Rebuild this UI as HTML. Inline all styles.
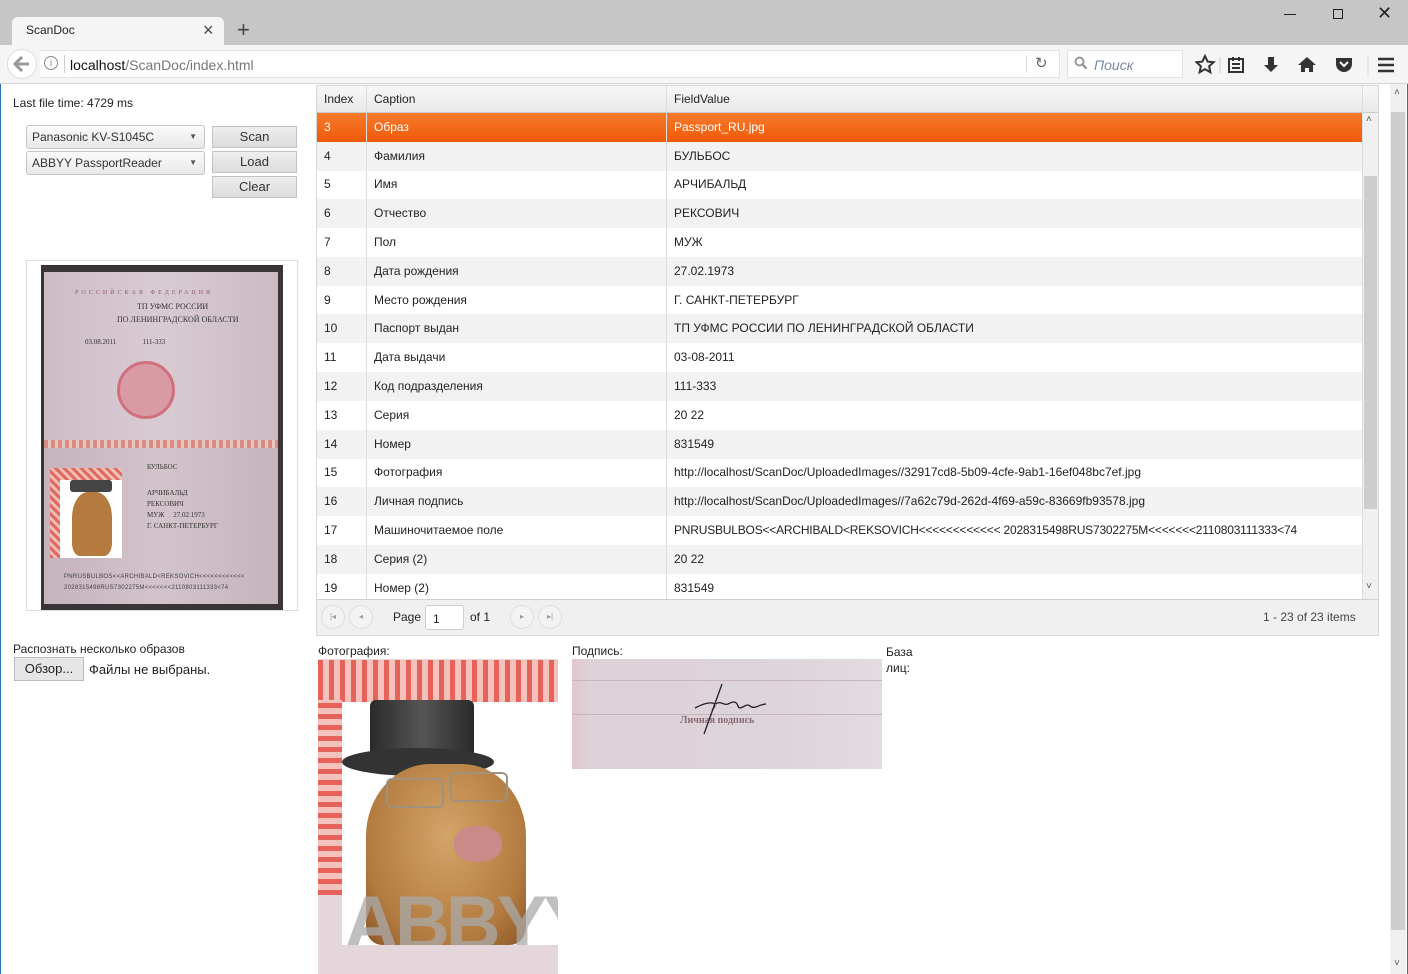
<!DOCTYPE html>
<html><head><meta charset="utf-8"><style>
*{box-sizing:border-box;margin:0;padding:0}
body{width:1408px;height:974px;overflow:hidden;background:#fff;font-family:"Liberation Sans","DejaVu Sans",sans-serif;font-size:12px;color:#222;position:relative}
.abs{position:absolute}
.tabbar{left:0;top:0;width:1408px;height:45px;background:#c6c6c6}
.tab{left:12px;top:17px;width:212px;height:30px;background:#f5f5f5;border-radius:6px 6px 0 0}
.nav{left:0;top:45px;width:1408px;height:39px;background:#f5f5f5;border-bottom:1px solid #d4d4d4}
.url{left:40px;top:50px;width:1020px;height:28px;background:#fff;border:1px solid #e2e2e2;border-left:none}
.search{left:1067px;top:50px;width:116px;height:28px;background:#fff;border:1px solid #e2e2e2}
.sel{left:26px;width:179px;height:24px;border:1px solid #c5c5c5;border-radius:3px;background:linear-gradient(#fafafa,#e8e8e8);padding:4px 5px;color:#333}
.sel:after{content:"▼";position:absolute;right:7px;top:6px;font-size:8px;color:#555}
.btn{left:212px;width:85px;height:22px;border:1px solid #c2c2c2;background:linear-gradient(#eee,#dcdcdc);text-align:center;line-height:20px;font-size:13px;color:#333}
.grid{left:316px;top:85px;width:1063px;height:551px;border:1px solid #d6d6d6}
.row{position:absolute;left:0;width:1045px;height:29px;line-height:29px}
.row span{position:absolute;top:0}
.c1{left:7px}.c2{left:57px}.c3{left:357px;white-space:nowrap}
.alt{background:#f2f2f2}
.vl{position:absolute;top:0;width:1px;background:#ddd}
.pbtn{width:24px;height:24px;border:1px solid #ddd;border-radius:50%;position:absolute;top:519px;font-size:8px;color:#999;text-align:center;line-height:22px;background:#f3f3f3}
</style></head><body>
<div class="abs tabbar"></div>
<div class="abs tab"></div>
<div class="abs" style="left:26px;top:23px;font-size:12px">ScanDoc</div>
<div class="abs" style="left:203px;top:20px;font-size:18px;color:#444">×</div>
<div class="abs" style="left:237px;top:17px;font-size:22px;color:#444">+</div>
<div class="abs" style="left:1284px;top:14px;width:12px;height:1px;background:#222"></div>
<div class="abs" style="left:1333px;top:9px;width:10px;height:10px;border:1px solid #222"></div>
<div class="abs" style="left:1377px;top:3px;font-size:18px;color:#222">✕</div>
<div class="abs nav"></div>
<div class="abs" style="left:7px;top:49px;width:30px;height:30px;border-radius:50%;background:#fff;border:1px solid #ddd"></div>
<svg class="abs" style="left:13px;top:56px" width="18" height="16"><path d="M9 1L2 8l7 7M2 8h14" fill="none" stroke="#999" stroke-width="3"/></svg>
<div class="abs url"></div>
<div class="abs" style="left:44px;top:56px;width:14px;height:14px;border:1px solid #888;border-radius:50%;font-size:9px;text-align:center;line-height:12px;color:#777">i</div>
<div class="abs" style="left:64px;top:55px;width:1px;height:18px;background:#ccc"></div>
<div class="abs" style="left:70px;top:57px;font-size:14px;color:#111">localhost<span style="color:#777">/ScanDoc/index.html</span></div>
<div class="abs" style="left:1026px;top:55px;width:1px;height:18px;background:#ddd"></div>
<div class="abs" style="left:1035px;top:54px;font-size:15px;color:#666">↻</div>
<div class="abs search"></div>
<svg class="abs" style="left:1074px;top:56px" width="14" height="14"><circle cx="5.5" cy="5.5" r="4" fill="none" stroke="#999" stroke-width="2"/><path d="M8.5 8.5l4 4" stroke="#999" stroke-width="2.5"/></svg>
<div class="abs" style="left:1094px;top:57px;font-size:14px;font-style:italic;color:#7a8aa0">Поиск</div>
<svg class="abs" style="left:1195px;top:54px" width="200" height="22" viewBox="0 0 200 22">
<path d="M10 2l2.6 5.6 6 .6-4.5 4 1.3 6-5.4-3.1-5.4 3.1 1.3-6-4.5-4 6-.6z" fill="none" stroke="#333" stroke-width="2"/>
<line x1="25" y1="3" x2="25" y2="19" stroke="#ccc"/>
<rect x="34" y="5" width="14" height="13" fill="none" stroke="#333" stroke-width="2"/><path d="M38 3v4M44 3v4M37 10h8M37 14h8" stroke="#333" stroke-width="2"/>
<path d="M73 3v8h-4l7 7 7-7h-4V3z" fill="#333"/>
<path d="M112 3l-9 8h3v7h4v-4h4v4h4v-7h3z" fill="#333"/>
<path d="M141 4h16v6a8 8 0 0 1-16 0z" fill="#333"/><path d="M145 8l4 4 4-4" stroke="#fff" stroke-width="2" fill="none"/>
<line x1="173" y1="0" x2="173" y2="22" stroke="#ddd"/>
<path d="M183 5h16M183 11h16M183 17h16" stroke="#333" stroke-width="2.5"/>
</svg>
<div class="abs" style="left:0;top:84px;width:1px;height:890px;background:#2b6fbf"></div>
<div class="abs" style="left:1407px;top:84px;width:1px;height:890px;background:#2b6fbf"></div>

<div class="abs" style="left:13px;top:96px">Last file time: 4729 ms</div>
<div class="abs sel" style="top:125px">Panasonic KV-S1045C</div>
<div class="abs sel" style="top:151px">ABBYY PassportReader</div>
<div class="abs btn" style="top:126px">Scan</div>
<div class="abs btn" style="top:151px">Load</div>
<div class="abs btn" style="top:176px">Clear</div>

<div class="abs" style="left:26px;top:260px;width:272px;height:351px;border:1px solid #ddd"></div>
<div class="abs" style="left:41px;top:265px;width:242px;height:345px;background:#3a3437"></div>
<div class="abs" style="left:44px;top:272px;width:234px;height:168px;background:linear-gradient(90deg,#cdbcc6,#d9cbd3 50%,#cbbac3)"></div>
<div class="abs" style="left:44px;top:440px;width:234px;height:8px;background:repeating-linear-gradient(90deg,#d98b86 0 4px,#e8c6c0 4px 7px)"></div>
<div class="abs" style="left:44px;top:448px;width:234px;height:156px;background:linear-gradient(90deg,#c5b3bd,#d3c3cb 50%,#c6b4bd)"></div>
<div class="abs" style="left:117px;top:361px;width:58px;height:58px;border-radius:50%;border:3px solid #d0707f;background:#d89aa5"></div>
<div class="abs" style="left:75px;top:290px;font-family:'Liberation Serif',serif;font-size:6px;letter-spacing:3px;color:#8a5a6a">РОССИЙСКАЯ ФЕДЕРАЦИЯ</div>
<div class="abs" style="left:137px;top:302px;font-family:'Liberation Serif',serif;font-size:8px;color:#333">ТП УФМС РОССИИ</div>
<div class="abs" style="left:117px;top:315px;font-family:'Liberation Serif',serif;font-size:8px;color:#333">ПО ЛЕНИНГРАДСКОЙ ОБЛАСТИ</div>
<div class="abs" style="left:85px;top:338px;font-family:'Liberation Serif',serif;font-size:7px;color:#333">03.08.2011 &nbsp; &nbsp; &nbsp; &nbsp; &nbsp; &nbsp; &nbsp; 111-333</div>
<div class="abs" style="left:50px;top:468px;width:72px;height:90px;background:repeating-linear-gradient(45deg,#e06a60 0 3px,#f0c0b8 3px 6px)"></div>
<div class="abs" style="left:60px;top:480px;width:62px;height:78px;background:#fff"></div>
<div class="abs" style="left:70px;top:480px;width:42px;height:12px;background:#444;border-radius:3px"></div>
<div class="abs" style="left:72px;top:492px;width:40px;height:64px;background:#b47a3e;border-radius:40% 40% 20% 20%"></div>
<div class="abs" style="left:147px;top:463px;font-family:'Liberation Serif',serif;font-size:7px;color:#333">БУЛЬБОС</div>
<div class="abs" style="left:147px;top:488px;font-family:'Liberation Serif',serif;font-size:7px;color:#333;line-height:11px">АРЧИБАЛЬД<br>РЕКСОВИЧ<br>МУЖ &nbsp; &nbsp; 27.02.1973<br>Г. САНКТ-ПЕТЕРБУРГ</div>
<div class="abs" style="left:64px;top:572px;font-size:6px;color:#444;line-height:11px;letter-spacing:.3px">PNRUSBULBOS&lt;&lt;ARCHIBALD&lt;REKSOVICH&lt;&lt;&lt;&lt;&lt;&lt;&lt;&lt;&lt;&lt;&lt;&lt;<br>2028315498RUS7302275M&lt;&lt;&lt;&lt;&lt;&lt;&lt;2110803111333&lt;74</div>

<div class="abs" style="left:13px;top:642px">Распознать несколько образов</div>
<div class="abs" style="left:14px;top:657px;width:70px;height:24px;border:1px solid #bbb;background:#e6e6e6;text-align:center;line-height:22px;font-size:13px">Обзор...</div>
<div class="abs" style="left:89px;top:662px;font-size:13px">Файлы не выбраны.</div>

<div class="abs grid">
<div style="position:absolute;left:0;top:0;width:1061px;height:27px;background:linear-gradient(#f7f7f7,#e9e9e9);border-bottom:1px solid #ccc"></div>
<div class="row" style="top:0;height:27px;line-height:27px"><span class="c1">Index</span><span class="c2">Caption</span><span class="c3">FieldValue</span></div>
<div class="row" style="top:27px;background:linear-gradient(#f57a2c,#f05a0a);color:#fff"><span class="c1">3</span><span class="c2">Образ</span><span class="c3">Passport_RU.jpg</span></div>
<div class="row alt" style="top:56px"><span class="c1">4</span><span class="c2">Фамилия</span><span class="c3">БУЛЬБОС</span></div>
<div class="row" style="top:84px"><span class="c1">5</span><span class="c2">Имя</span><span class="c3">АРЧИБАЛЬД</span></div>
<div class="row alt" style="top:113px"><span class="c1">6</span><span class="c2">Отчество</span><span class="c3">РЕКСОВИЧ</span></div>
<div class="row" style="top:142px"><span class="c1">7</span><span class="c2">Пол</span><span class="c3">МУЖ</span></div>
<div class="row alt" style="top:171px"><span class="c1">8</span><span class="c2">Дата рождения</span><span class="c3">27.02.1973</span></div>
<div class="row" style="top:200px"><span class="c1">9</span><span class="c2">Место рождения</span><span class="c3">Г. САНКТ-ПЕТЕРБУРГ</span></div>
<div class="row alt" style="top:228px"><span class="c1">10</span><span class="c2">Паспорт выдан</span><span class="c3">ТП УФМС РОССИИ ПО ЛЕНИНГРАДСКОЙ ОБЛАСТИ</span></div>
<div class="row" style="top:257px"><span class="c1">11</span><span class="c2">Дата выдачи</span><span class="c3">03-08-2011</span></div>
<div class="row alt" style="top:286px"><span class="c1">12</span><span class="c2">Код подразделения</span><span class="c3">111-333</span></div>
<div class="row" style="top:315px"><span class="c1">13</span><span class="c2">Серия</span><span class="c3">20 22</span></div>
<div class="row alt" style="top:344px"><span class="c1">14</span><span class="c2">Номер</span><span class="c3">831549</span></div>
<div class="row" style="top:372px"><span class="c1">15</span><span class="c2">Фотография</span><span class="c3">http://localhost/ScanDoc/UploadedImages//32917cd8-5b09-4cfe-9ab1-16ef048bc7ef.jpg</span></div>
<div class="row alt" style="top:401px"><span class="c1">16</span><span class="c2">Личная подпись</span><span class="c3">http://localhost/ScanDoc/UploadedImages//7a62c79d-262d-4f69-a59c-83669fb93578.jpg</span></div>
<div class="row" style="top:430px"><span class="c1">17</span><span class="c2">Машиночитаемое поле</span><span class="c3" style="letter-spacing:-.2px">PNRUSBULBOS&lt;&lt;ARCHIBALD&lt;REKSOVICH&lt;&lt;&lt;&lt;&lt;&lt;&lt;&lt;&lt;&lt;&lt;&lt; 2028315498RUS7302275M&lt;&lt;&lt;&lt;&lt;&lt;&lt;2110803111333&lt;74</span></div>
<div class="row alt" style="top:459px"><span class="c1">18</span><span class="c2">Серия (2)</span><span class="c3">20 22</span></div>
<div class="row" style="top:488px"><span class="c1">19</span><span class="c2">Номер (2)</span><span class="c3">831549</span></div>
<div class="vl" style="left:49px;height:513px"></div>
<div class="vl" style="left:349px;height:513px"></div>
<div style="position:absolute;left:1045px;top:0;width:1px;height:513px;background:#ddd"></div>
<div style="position:absolute;left:1046px;top:27px;width:15px;height:486px;background:#f0f0f0"></div>
<div style="position:absolute;left:1047px;top:90px;width:13px;height:333px;background:#cdcdcd"></div>
<div style="position:absolute;left:1049px;top:28px;font-size:10px;color:#555">˄</div>
<div style="position:absolute;left:1049px;top:495px;font-size:10px;color:#555">˅</div>
<div style="position:absolute;left:0;top:513px;width:1061px;height:36px;background:#f0f0f0;border-top:1px solid #d0d0d0"></div>
<div class="pbtn" style="left:4px">|◂</div><div class="pbtn" style="left:32px">◂</div>
<div style="position:absolute;left:76px;top:524px">Page</div>
<div style="position:absolute;left:108px;top:519px;width:39px;height:25px;background:#fff;border:1px solid #ccc;border-radius:3px;padding:6px 7px">1</div>
<div style="position:absolute;left:153px;top:524px">of 1</div>
<div class="pbtn" style="left:193px">▸</div><div class="pbtn" style="left:221px">▸|</div>
<div style="position:absolute;left:946px;top:524px;color:#444">1 - 23 of 23 items</div>
</div>
<div class="abs" style="left:1390px;top:84px;width:16px;height:890px;background:#f0f0f0"></div>
<div class="abs" style="left:1391px;top:112px;width:14px;height:818px;background:#cdcdcd"></div>
<div class="abs" style="left:1394px;top:87px;font-size:10px;color:#555">˄</div>
<div class="abs" style="left:1394px;top:958px;font-size:10px;color:#555">˅</div>

<div class="abs" style="left:318px;top:644px">Фотография:</div>
<div class="abs" style="left:318px;top:659px;width:240px;height:315px;background:#e4d6da;overflow:hidden">
<div class="abs" style="left:0;top:1px;width:240px;height:42px;background:repeating-linear-gradient(90deg,#e7635a 0 5px,#f3c2bc 5px 11px)"></div>
<div class="abs" style="left:0;top:41px;width:24px;height:195px;background:repeating-linear-gradient(0deg,#e7635a 0 5px,#f3c2bc 5px 11px)"></div>
<div class="abs" style="left:24px;top:43px;width:216px;height:243px;background:#fff"></div>
<div class="abs" style="left:52px;top:41px;width:104px;height:60px;background:linear-gradient(90deg,#2a2a2a,#555,#2a2a2a);border-radius:6px 6px 0 0"></div>
<div class="abs" style="left:24px;top:89px;width:152px;height:28px;background:#333;border-radius:50%"></div>
<div class="abs" style="left:48px;top:105px;width:160px;height:181px;background:radial-gradient(ellipse at 50% 40%,#d4a468,#b27a3e 70%,#8a5628);border-radius:40% 40% 10% 10%"></div>
<div class="abs" style="left:68px;top:119px;width:58px;height:30px;border:2px solid #a09080;border-radius:6px"></div>
<div class="abs" style="left:132px;top:113px;width:58px;height:30px;border:2px solid #a09080;border-radius:6px"></div>
<div class="abs" style="left:136px;top:167px;width:48px;height:36px;background:#c98a88;border-radius:45%"></div>
<div class="abs" style="left:26px;top:230px;font-size:76px;font-weight:bold;color:rgba(170,170,170,.75);letter-spacing:-4px;line-height:70px;height:56px;overflow:hidden">ABBYY</div>
</div>
<div class="abs" style="left:572px;top:644px">Подпись:</div>
<div class="abs" style="left:572px;top:659px;width:310px;height:110px;background:linear-gradient(90deg,#e2c6cf 0,#ddd2d8 6%,#ddd3da 60%,#e3dbe0)"></div>
<div class="abs" style="left:572px;top:680px;width:310px;height:1px;background:#c8b4bc"></div>
<div class="abs" style="left:572px;top:714px;width:310px;height:1px;background:#c8b4bc"></div>
<div class="abs" style="left:680px;top:715px;font-family:'Liberation Serif',serif;font-size:10px;font-weight:bold;color:#8a6a70">Личная подпись</div>
<svg class="abs" style="left:690px;top:680px" width="90" height="56"><path d="M5 28 C20 20 30 22 22 30 M32 4 L14 54 M26 24 C30 20 34 26 38 24 S46 20 48 26 S56 22 60 26 S70 24 76 24" fill="none" stroke="#222" stroke-width="1.3"/></svg>
<div class="abs" style="left:886px;top:644px;line-height:16px">База<br>лиц:</div>
</body></html>
